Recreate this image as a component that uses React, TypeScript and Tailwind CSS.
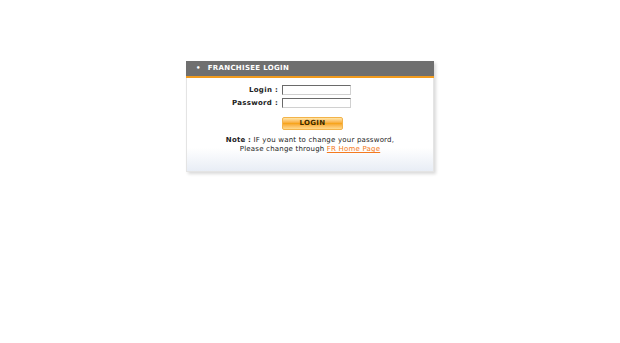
export default function App() {
  return (
    <div className="w-[620px] h-[343px] bg-white pt-[61px] pl-[186px]" style={{ fontFamily: '"DejaVu Sans", Verdana, sans-serif' }}>
      <div className="w-[248px] shadow-[2px_2px_3px_rgba(0,0,0,0.15)]">
        <div className="h-[15px] bg-[#6f6f6f] flex items-center pl-[10px] text-[7px] font-bold text-white tracking-[0.3px]">
          <span className="mr-[7px] text-[7px]">•</span>
          FRANCHISEE LOGIN
        </div>
        <div className="h-[2px] bg-[#f29b1d]" />
        <div className="bg-gradient-to-b from-white from-[75%] to-[#e8edf5] border-x border-b border-[#e4e4e4] h-[94px] pt-[7px]">
          <div className="grid grid-cols-[95px_69px] gap-y-[2px] items-center">
            <span className="text-[7px] font-bold text-[#222] text-right pr-[4px] tracking-[0.3px]">Login :</span>
            <input className="w-[69px] h-[10px] border border-[#6a6a6a] border-b-[#d0d0d0] border-r-[#d0d0d0] bg-white" />
            <span className="text-[7px] font-bold text-[#222] text-right pr-[4px] tracking-[0.3px]">Password :</span>
            <input className="w-[69px] h-[10px] border border-[#6a6a6a] border-b-[#d0d0d0] border-r-[#d0d0d0] bg-white" />
          </div>
          <button className="mt-[9px] ml-[95px] w-[61px] h-[13px] rounded-[2px] border border-[#f3b34a] bg-gradient-to-b from-[#ffe6a8] via-[#f7a51c] to-[#ffd98a] text-[7px] font-bold text-[#3a2a00] flex items-center justify-center tracking-[0.3px]">
            LOGIN
          </button>
          <div className="mt-[6px] text-[7px] text-[#222] text-center leading-[9px] tracking-[0.2px]">
            <div><b>Note :</b> IF you want to change your password,</div>
            <div>Please change through <a className="text-[#f47a20] underline">FR Home Page</a></div>
          </div>
        </div>
      </div>
    </div>
  );
}
